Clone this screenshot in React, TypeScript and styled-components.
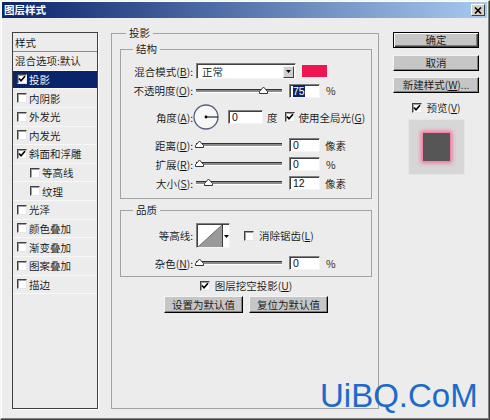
import React from 'react';
import styled, { createGlobalStyle } from 'styled-components';

const GlobalStyle = createGlobalStyle`
  html, body {
    margin: 0;
    padding: 0;
    background: #ececec;
  }
  body {
    font-family: "Noto Sans CJK SC", "Liberation Sans", sans-serif;
    font-size: 10.5px;
    font-weight: 350;
    color: #111;
  }
`;

const Window = styled.div`
  position: relative;
  width: 490px;
  height: 420px;
  box-sizing: border-box;
  background: #ececec;
  border: 1px solid;
  border-color: #f4f4f4 #404040 #404040 #f4f4f4;
  box-shadow: inset -1px -1px 0 #808080, inset 1px 1px 0 #fff;
  padding: 1px 2px 2px 1px;
  display: flex;
  flex-direction: column;
  overflow: hidden;
`;

const TitleBar = styled.div`
  height: 16px;
  flex-shrink: 0;
  display: flex;
  align-items: center;
  justify-content: space-between;
  padding: 0 2px 0 2px;
  background: linear-gradient(to right, #0a246a, #a6caf0);
  color: #fff;
  font-weight: bold;
  font-size: 10.5px;
  line-height: 12px;
`;

const CloseBtn = styled.span`
  width: 14px;
  height: 12px;
  box-sizing: border-box;
  background: #d4d0c8;
  border: 1px solid;
  border-color: #fff #404040 #404040 #fff;
  display: flex;
  align-items: center;
  justify-content: center;
`;

const Body = styled.div`
  flex: 1;
  display: flex;
  align-items: flex-start;
  padding: 0 9px 0 10px;
`;

/* ---------- left style list ---------- */

const StyleList = styled.div`
  margin-top: 14px;
  width: 86px;
  height: 377px;
  box-sizing: border-box;
  border: 1px solid #404040;
  box-shadow: 1px 1px 0 #fff;
  flex-shrink: 0;
`;

const ListHeader = styled.div`
  height: 19px;
  box-sizing: border-box;
  border-bottom: 1px solid #8a8a8a;
  padding-left: 2px;
  display: flex;
  align-items: center;
`;

const ListRow = styled.div<{ $selected?: boolean; $indent?: number }>`
  height: 18.64px;
  box-sizing: border-box;
  border-bottom: 1px solid #f8f8f8;
  display: flex;
  align-items: center;
  gap: 2px;
  padding-left: ${p => p.$indent ?? 4}px;
  background: ${p => (p.$selected ? '#0a246a' : 'transparent')};
  color: ${p => (p.$selected ? '#fff' : '#111')};
  white-space: nowrap;
`;

/* ---------- group boxes ---------- */

const Middle = styled.div`
  margin-left: 13px;
  margin-top: 9px;
  width: 268px;
  flex-shrink: 0;
`;

const Group = styled.fieldset<{ $pad: string; $h?: number; $mt?: number }>`
  margin: ${p => p.$mt ?? 0}px 0 0 0;
  padding: ${p => p.$pad};
  border: 1px solid #a3a3a3;
  min-width: 0;
  box-sizing: border-box;
  ${p => (p.$h ? `height: ${p.$h}px;` : '')}
`;

const Legend = styled.legend<{ $ml: number }>`
  margin-left: ${p => p.$ml}px;
  padding: 0 3px;
  line-height: 12px;
  font-size: 10.5px;
`;

const Row = styled.div<{ $h: number; $mt?: number; $center?: boolean }>`
  display: flex;
  align-items: center;
  height: ${p => p.$h}px;
  margin-top: ${p => p.$mt ?? 0}px;
  justify-content: ${p => (p.$center ? 'center' : 'flex-start')};
  white-space: nowrap;
`;

const Label = styled.span`
  width: 72px;
  margin-right: 3px;
  text-align: right;
  flex-shrink: 0;
`;

const Text = styled.span<{ $ml?: number }>`
  margin-left: ${p => p.$ml ?? 0}px;
`;

const NumInput = styled.div<{ $w?: number; $ml?: number }>`
  width: ${p => p.$w ?? 31}px;
  height: 14px;
  margin-left: ${p => p.$ml ?? 7}px;
  box-sizing: border-box;
  background: #fff;
  border: 1px solid;
  border-color: #808080 #f4f4f4 #f4f4f4 #808080;
  box-shadow: inset 1px 1px 0 #404040;
  padding-left: 3px;
  font-family: "Liberation Sans", sans-serif;
  font-size: 10.5px;
  font-weight: normal;
  line-height: 12px;
  flex-shrink: 0;
`;

const SelText = styled.span`
  background: #0a246a;
  color: #fff;
`;

const Select = styled.div`
  width: 100px;
  height: 16px;
  box-sizing: border-box;
  background: #fff;
  border: 1px solid;
  border-color: #808080 #f4f4f4 #f4f4f4 #808080;
  box-shadow: inset 1px 1px 0 #404040;
  display: flex;
  align-items: center;
  justify-content: space-between;
  padding: 1px 1px 0 5px;
`;

const DropBtn = styled.span`
  width: 11px;
  height: 12px;
  box-sizing: border-box;
  background: #cfcfcf;
  border: 1px solid;
  border-color: #f4f4f4 #404040 #404040 #f4f4f4;
  display: flex;
  align-items: center;
  justify-content: center;
`;

const Swatch = styled.span<{ $color: string }>`
  width: 25px;
  height: 12px;
  margin-left: 6px;
  background: ${p => p.$color};
`;

const Dial = styled.svg`
  margin-left: -3px;
  flex-shrink: 0;
`;

const ContourBox = styled.div`
  width: 34px;
  height: 25px;
  box-sizing: border-box;
  background: #fff;
  border: 1px solid;
  border-color: #808080 #f4f4f4 #f4f4f4 #808080;
  box-shadow: inset 1px 1px 0 #404040;
  display: flex;
  padding: 1px 0 0 1px;
`;

const ContourDrop = styled.span`
  flex: 1;
  border-left: 1px solid #404040;
  display: flex;
  align-items: center;
  justify-content: center;
`;

/* ---------- slider ---------- */

const SliderBox = styled.div<{ $w: number }>`
  position: relative;
  width: ${p => p.$w}px;
  height: 14px;
  flex-shrink: 0;
  display: flex;
  align-items: center;
`;

const Track = styled.div`
  width: 100%;
  height: 4px;
  box-sizing: border-box;
  background: #8a8a8a;
  border-top: 1px solid #333;
  border-bottom: 1px solid #fff;
`;

const Thumb = styled.svg<{ $x: number }>`
  position: absolute;
  left: ${p => p.$x - 4}px;
  top: 2px;
`;

function Slider({ x, w = 86 }: { x: number; w?: number }) {
  return (
    <SliderBox $w={w}>
      <Track />
      <Thumb $x={x} width="9" height="8" viewBox="0 0 9 8">
        <path d="M0.5 7.5 L0.5 5.5 L4.5 1 L8.5 5.5 L8.5 7.5 Z" fill="#fff" stroke="#333" />
      </Thumb>
    </SliderBox>
  );
}

/* ---------- checkbox ---------- */

const CheckBox = styled.span<{ $ml?: number }>`
  display: inline-flex;
  align-items: center;
  justify-content: center;
  width: 10px;
  height: 10px;
  margin-left: ${p => p.$ml ?? 0}px;
  box-sizing: border-box;
  flex-shrink: 0;
  background: #fff;
  border: 1px solid;
  border-color: #404040 #e6e6e6 #e6e6e6 #404040;
  box-shadow: inset 1px 1px 0 #a0a0a0;
`;

function Check({ on, ml }: { on?: boolean; ml?: number }) {
  return (
    <CheckBox $ml={ml}>
      {on && (
        <svg width="8" height="8" viewBox="0 0 8 8">
          <path d="M1 3.5 L3 5.7 L7 1.2" fill="none" stroke="#000" strokeWidth="1.7" />
        </svg>
      )}
    </CheckBox>
  );
}

/* ---------- buttons ---------- */

const Btn = styled.div<{ $w: number; $h?: number; $default?: boolean; $mt?: number }>`
  width: ${p => p.$w}px;
  height: ${p => p.$h ?? 16}px;
  margin-top: ${p => p.$mt ?? 0}px;
  box-sizing: border-box;
  background: #c6c6c6;
  border: 1px solid ${p => (p.$default ? '#000' : '#f4f4f4')};
  ${p => (p.$default ? '' : 'border-right-color: #000; border-bottom-color: #000;')}
  box-shadow: ${p =>
    p.$default
      ? 'inset 1px 1px 0 #fff, inset -1px -1px 0 #404040, inset -2px -2px 0 #808080'
      : 'inset -1px -1px 0 #808080'};
  display: flex;
  align-items: center;
  justify-content: center;
  font-size: 10.5px;
  line-height: 12px;
  white-space: nowrap;
  flex-shrink: 0;
`;

const BtnRow = styled.div`
  display: flex;
  justify-content: center;
  gap: 6px;
  margin-top: 4px;
`;

/* ---------- right side ---------- */

const Side = styled.div`
  margin-left: 14px;
  margin-top: 14px;
  width: 86px;
  flex-shrink: 0;
  display: flex;
  flex-direction: column;
`;

const Preview = styled.div`
  width: 57px;
  height: 56px;
  margin: 5px auto 0;
  box-sizing: border-box;
  background: #d7d7d7;
  border: 1px solid #e6e6e6;
  display: flex;
  align-items: center;
  justify-content: center;
`;

const PreviewSquare = styled.div`
  width: 27px;
  height: 28px;
  background: #565656;
  box-shadow: 0 0 4px 2px rgba(255, 90, 140, 0.85);
`;

const Watermark = styled.div`
  position: absolute;
  left: 319px;
  top: 378px;
  font-family: "Liberation Sans", Arial, sans-serif;
  font-size: 33px;
  font-weight: normal;
  line-height: 33px;
  color: #1d6bc8;
`;

const Mn = ({ k }: { k: string }) => (
  <>
    (<u>{k}</u>)
  </>
);

const styleItems: { name: string; on?: boolean; selected?: boolean; indent?: number }[] = [
  { name: '投影', on: true, selected: true },
  { name: '内阴影' },
  { name: '外发光' },
  { name: '内发光' },
  { name: '斜面和浮雕', on: true },
  { name: '等高线', indent: 17 },
  { name: '纹理', indent: 17 },
  { name: '光泽' },
  { name: '颜色叠加' },
  { name: '渐变叠加' },
  { name: '图案叠加' },
  { name: '描边' },
];

export default function App() {
  return (
    <>
      <GlobalStyle />
      <Window>
        <TitleBar>
          <span>图层样式</span>
          <CloseBtn>
            <svg width="8" height="7" viewBox="0 0 8 7">
              <path d="M1 0.5 L7 6.5 M7 0.5 L1 6.5" stroke="#000" strokeWidth="1.6" />
            </svg>
          </CloseBtn>
        </TitleBar>
        <Body>
          <StyleList>
            <ListHeader>样式</ListHeader>
            <ListRow $indent={2}>混合选项:默认</ListRow>
            {styleItems.map(item => (
              <ListRow key={item.name} $selected={item.selected} $indent={item.indent}>
                <Check on={item.on} />
                <span>{item.name}</span>
              </ListRow>
            ))}
          </StyleList>

          <Middle>
            <Group $pad="4px 6px 0 8px" $h={382}>
              <Legend $ml={6}>投影</Legend>

              <Group $pad="8px 0 8px 0">
                <Legend $ml={12}>结构</Legend>
                <Row $h={16}>
                  <Label>
                    混合模式<Mn k="B" />:
                  </Label>
                  <Select>
                    <span>正常</span>
                    <DropBtn>
                      <svg width="5" height="3" viewBox="0 0 5 3">
                        <path d="M0 0 L5 0 L2.5 3 Z" fill="#000" />
                      </svg>
                    </DropBtn>
                  </Select>
                  <Swatch $color="#ee1552" />
                </Row>
                <Row $h={15} $mt={4}>
                  <Label>
                    不透明度<Mn k="O" />:
                  </Label>
                  <Slider x={67} />
                  <NumInput>
                    <SelText>75</SelText>
                  </NumInput>
                  <Text $ml={6}>%</Text>
                </Row>
                <Row $h={30} $mt={4}>
                  <Label>
                    角度<Mn k="A" />:
                  </Label>
                  <Dial width="26" height="26" viewBox="0 0 26 26">
                    <circle cx="13" cy="13" r="12" fill="#f7f7f7" stroke="#55607e" strokeWidth="1.3" />
                    <line x1="13" y1="13" x2="25" y2="13" stroke="#000" strokeWidth="1" />
                    <circle cx="13" cy="13" r="1.4" fill="#000" />
                  </Dial>
                  <NumInput $w={35} $ml={9}>0</NumInput>
                  <Text $ml={4}>度</Text>
                  <Check on ml={7} />
                  <Text $ml={4}>
                    使用全局光<Mn k="G" />
                  </Text>
                </Row>
                <Row $h={14} $mt={6}>
                  <Label>
                    距离<Mn k="D" />:
                  </Label>
                  <Slider x={3} />
                  <NumInput>0</NumInput>
                  <Text $ml={5}>像素</Text>
                </Row>
                <Row $h={14} $mt={5}>
                  <Label>
                    扩展<Mn k="R" />:
                  </Label>
                  <Slider x={3} />
                  <NumInput>0</NumInput>
                  <Text $ml={6}>%</Text>
                </Row>
                <Row $h={14} $mt={5}>
                  <Label>
                    大小<Mn k="S" />:
                  </Label>
                  <Slider x={12} />
                  <NumInput>12</NumInput>
                  <Text $ml={5}>像素</Text>
                </Row>
              </Group>

              <Group $pad="7px 0 6px 0" $mt={5}>
                <Legend $ml={12}>品质</Legend>
                <Row $h={25}>
                  <Label>等高线:</Label>
                  <ContourBox>
                    <svg width="24" height="22" viewBox="0 0 24 22">
                      <polygon points="0,22 24,0 24,22" fill="#9a9a9a" />
                      <line x1="0" y1="22" x2="24" y2="0" stroke="#6a6a6a" strokeWidth="1" />
                    </svg>
                    <ContourDrop>
                      <svg width="5" height="3" viewBox="0 0 5 3">
                        <path d="M0 0 L5 0 L2.5 3 Z" fill="#000" />
                      </svg>
                    </ContourDrop>
                  </ContourBox>
                  <Check ml={14} />
                  <Text $ml={5}>
                    消除锯齿<Mn k="L" />
                  </Text>
                </Row>
                <Row $h={14} $mt={8}>
                  <Label>
                    杂色<Mn k="N" />:
                  </Label>
                  <Slider x={3} />
                  <NumInput>0</NumInput>
                  <Text $ml={6}>%</Text>
                </Row>
              </Group>

              <Row $h={13} $mt={2} $center>
                <Check on />
                <Text $ml={5}>
                  图层挖空投影<Mn k="U" />
                </Text>
              </Row>
              <BtnRow>
                <Btn $w={79} $h={17}>设置为默认值</Btn>
                <Btn $w={79} $h={17}>复位为默认值</Btn>
              </BtnRow>
            </Group>
          </Middle>

          <Side>
            <Btn $w={86} $default>确定</Btn>
            <Btn $w={86} $mt={7}>取消</Btn>
            <Btn $w={86} $mt={6}>
              新建样式<Mn k="W" />...
            </Btn>
            <Row $h={13} $mt={8} $center>
              <Check on />
              <Text $ml={5}>
                预览<Mn k="V" />
              </Text>
            </Row>
            <Preview>
              <PreviewSquare />
            </Preview>
          </Side>
        </Body>
        <Watermark>UiBQ.CoM</Watermark>
      </Window>
    </>
  );
}
